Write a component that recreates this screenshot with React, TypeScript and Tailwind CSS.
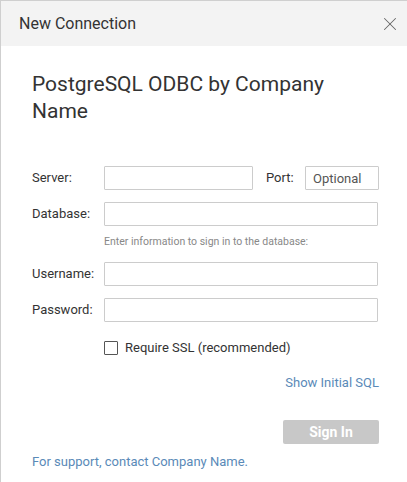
import { X } from 'lucide-react';

const font = { fontFamily: 'Roboto, "Liberation Sans", sans-serif' };

const Field = ({ label, className = '' }: { label: string; className?: string }) => (
    <div className={`flex items-center ${className}`}>
        <label className="w-[72px] shrink-0 text-[13px] leading-[16px] text-[#333]">{label}</label>
        <input className="h-[24px] w-[274px] shrink-0 border border-[#cccccc] rounded-[1px] outline-none px-2 text-[13px]" />
    </div>
);

export default function App() {
    return (
        <div
            className="w-[407px] h-[482px] bg-white border-l border-t border-[#cfcfcf] flex flex-col overflow-hidden"
            style={font}
        >
            <div className="h-[45px] shrink-0 bg-[#f3f3f3] flex items-center justify-between pl-[18px] pr-[6px]">
                <span className="text-[16px] text-[#333]">New Connection</span>
                <X className="w-[22px] h-[22px] text-[#666]" strokeWidth={1.1} />
            </div>
            <div className="flex flex-col pl-[31px] pr-[28px]">
                <h1 className="mt-[25px] w-[310px] text-[21px] leading-[27px] text-[#333] font-normal">
                    PostgreSQL ODBC by Company Name
                </h1>
                <div className="mt-[41px] flex items-center">
                    <label className="w-[72px] shrink-0 text-[13px] leading-[16px] text-[#333]">Server:</label>
                    <input className="h-[24px] w-[149px] shrink-0 border border-[#cccccc] rounded-[1px] outline-none px-2 text-[13px]" />
                    <label className="ml-[13px] w-[39px] shrink-0 text-[13px] leading-[16px] text-[#333]">Port:</label>
                    <input
                        placeholder="Optional"
                        className="h-[24px] w-[74px] shrink-0 border border-[#cccccc] rounded-[1px] outline-none px-[7px] text-[13px] placeholder:text-[#555]"
                    />
                </div>
                <Field label="Database:" className="mt-[12px]" />
                <p className="ml-[72px] mt-[9px] text-[10.5px] leading-[14px] text-[#888]">
                    Enter information to sign in to the database:
                </p>
                <Field label="Username:" className="mt-[13px]" />
                <Field label="Password:" className="mt-[12px]" />
                <label className="ml-[72px] mt-[18px] flex items-center gap-[7px] text-[13px] leading-[16px] text-[#333]">
                    <span className="w-[14px] h-[14px] shrink-0 border border-[#555] rounded-[1px] bg-white" />
                    Require SSL (recommended)
                </label>
                <a className="self-end mt-[19px] text-[13px] leading-[16px] text-[#5a8ab8]">Show Initial SQL</a>
                <button className="self-end mt-[29px] w-[96px] h-[24px] bg-[#c8c8c8] rounded-[2px] text-white text-[14px] font-bold">
                    Sign In
                </button>
                <a className="mt-[10px] text-[13px] leading-[16px] text-[#5a8ab8]">For support, contact Company Name.</a>
            </div>
        </div>
    );
}
